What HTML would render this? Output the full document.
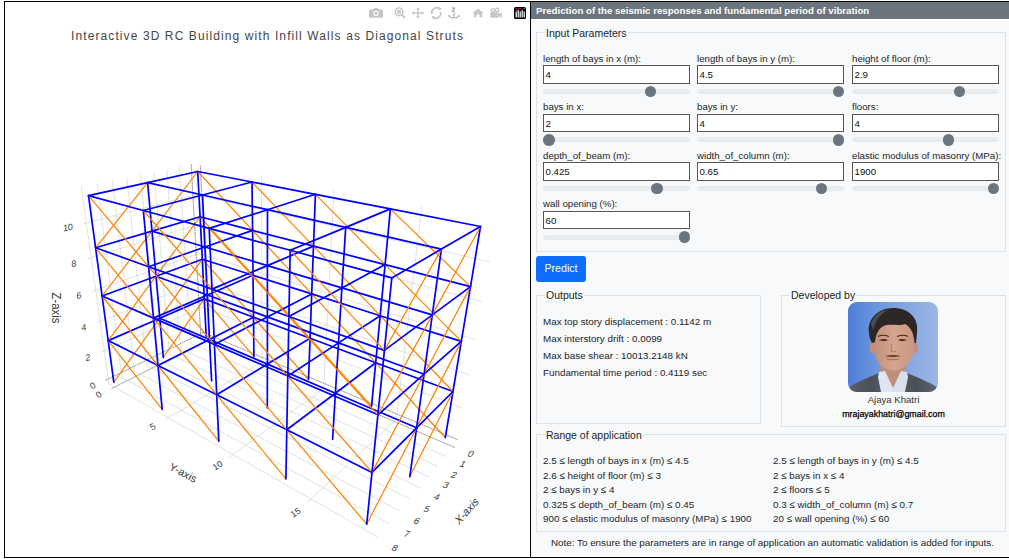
<!DOCTYPE html>
<html><head><meta charset="utf-8">
<style>
*{box-sizing:border-box;margin:0;padding:0}
html,body{width:1009px;height:559px;overflow:hidden;background:#fff;font-family:"Liberation Sans",sans-serif;color:#212529}
#wrap{position:absolute;left:4px;top:1px;width:1010px;height:557px;border:1px solid #000;border-right:none}
#left{position:absolute;left:5px;top:2px;width:525px;height:555px;background:#fff}
#divider{position:absolute;left:530px;top:1px;width:1px;height:557px;background:#000}
#right{position:absolute;left:531px;top:2px;width:478px;height:555px;background:#f8f9fa}
#hdr{position:absolute;left:531px;top:2px;width:478px;height:17px;background:#6c757d;color:#fff;font-weight:bold;font-size:9.68px;line-height:17px;padding-left:5px;white-space:nowrap}
#hdrline{position:absolute;left:531px;top:19px;width:478px;height:1px;background:#fff}
.fs{position:absolute;border:1px solid #dee2e6}
.lg{position:absolute;font-size:10.5px;line-height:12px;background:#f8f9fa;padding:0 1px;white-space:nowrap;color:#212529}
.lbl{position:absolute;font-size:9.7px;white-space:nowrap;line-height:11px}
.inp{position:absolute;height:18.5px;border:1px solid #555;background:#fff;font-size:9.7px;line-height:16.5px;padding-left:1.5px;padding-top:1px;color:#111}
.trk{position:absolute;height:5px;border-radius:3px;background:#e9ecef}
.thm{position:absolute;width:11.5px;height:11.5px;border-radius:50%;background:#6c757d}
.t{position:absolute;font-size:9.84px;white-space:nowrap;line-height:11px}
#btn{position:absolute;left:536px;top:256px;width:50px;height:26px;background:#0d6efd;border-radius:3px;color:#fff;font-size:10.6px;text-align:center;line-height:24px}
#title{position:absolute;left:0;top:29px;width:535px;text-align:center;font-size:12px;letter-spacing:1.1px;color:#444;white-space:nowrap;line-height:14px}
svg{position:absolute;left:0;top:0}
.mb{position:absolute}
.ax{position:absolute;color:#3a3a3a;white-space:nowrap;line-height:1}
</style></head><body>
<div id="left"></div>
<svg width="530" height="559" viewBox="0 0 530 559" style="left:0;top:0">
<g stroke-linecap="round">
<line x1="208.9" y1="339.3" x2="200.3" y2="164.9" stroke="#d0d0d0" stroke-width="0.7" stroke-dasharray="1.5,1"/>
<line x1="262.1" y1="362.0" x2="261.4" y2="176.2" stroke="#d0d0d0" stroke-width="0.7" stroke-dasharray="1.5,1"/>
<line x1="323.8" y1="388.4" x2="334.0" y2="189.6" stroke="#d0d0d0" stroke-width="0.7" stroke-dasharray="1.5,1"/>
<line x1="396.4" y1="419.4" x2="421.9" y2="205.8" stroke="#d0d0d0" stroke-width="0.7" stroke-dasharray="1.5,1"/>
<line x1="203.2" y1="332.5" x2="457.3" y2="439.5" stroke="#d0d0d0" stroke-width="0.7" stroke-dasharray="1.5,1"/>
<line x1="201.8" y1="307.3" x2="462.9" y2="408.1" stroke="#d0d0d0" stroke-width="0.7" stroke-dasharray="1.5,1"/>
<line x1="200.4" y1="281.0" x2="468.9" y2="374.8" stroke="#d0d0d0" stroke-width="0.7" stroke-dasharray="1.5,1"/>
<line x1="198.9" y1="253.6" x2="475.2" y2="339.5" stroke="#d0d0d0" stroke-width="0.7" stroke-dasharray="1.5,1"/>
<line x1="197.4" y1="224.8" x2="481.9" y2="301.8" stroke="#d0d0d0" stroke-width="0.7" stroke-dasharray="1.5,1"/>
<line x1="195.7" y1="194.7" x2="489.1" y2="261.7" stroke="#d0d0d0" stroke-width="0.7" stroke-dasharray="1.5,1"/>
<line x1="200.9" y1="338.2" x2="191.2" y2="164.4" stroke="#d0d0d0" stroke-width="0.7" stroke-dasharray="1.5,1"/>
<line x1="190.8" y1="343.3" x2="179.3" y2="166.9" stroke="#d0d0d0" stroke-width="0.7" stroke-dasharray="1.5,1"/>
<line x1="180.3" y1="348.5" x2="166.9" y2="169.4" stroke="#d0d0d0" stroke-width="0.7" stroke-dasharray="1.5,1"/>
<line x1="169.4" y1="353.9" x2="154.1" y2="172.1" stroke="#d0d0d0" stroke-width="0.7" stroke-dasharray="1.5,1"/>
<line x1="158.2" y1="359.5" x2="140.7" y2="174.9" stroke="#d0d0d0" stroke-width="0.7" stroke-dasharray="1.5,1"/>
<line x1="146.5" y1="365.3" x2="126.8" y2="177.8" stroke="#d0d0d0" stroke-width="0.7" stroke-dasharray="1.5,1"/>
<line x1="134.5" y1="371.3" x2="112.3" y2="180.8" stroke="#d0d0d0" stroke-width="0.7" stroke-dasharray="1.5,1"/>
<line x1="121.9" y1="377.5" x2="97.2" y2="183.9" stroke="#d0d0d0" stroke-width="0.7" stroke-dasharray="1.5,1"/>
<line x1="108.9" y1="383.9" x2="81.3" y2="187.2" stroke="#d0d0d0" stroke-width="0.7" stroke-dasharray="1.5,1"/>
<line x1="203.2" y1="332.5" x2="104.9" y2="380.6" stroke="#d0d0d0" stroke-width="0.7" stroke-dasharray="1.5,1"/>
<line x1="201.8" y1="307.3" x2="100.9" y2="352.4" stroke="#d0d0d0" stroke-width="0.7" stroke-dasharray="1.5,1"/>
<line x1="200.4" y1="281.0" x2="96.6" y2="322.8" stroke="#d0d0d0" stroke-width="0.7" stroke-dasharray="1.5,1"/>
<line x1="198.9" y1="253.6" x2="92.1" y2="291.6" stroke="#d0d0d0" stroke-width="0.7" stroke-dasharray="1.5,1"/>
<line x1="197.4" y1="224.8" x2="87.4" y2="258.7" stroke="#d0d0d0" stroke-width="0.7" stroke-dasharray="1.5,1"/>
<line x1="195.7" y1="194.7" x2="82.4" y2="224.0" stroke="#d0d0d0" stroke-width="0.7" stroke-dasharray="1.5,1"/>
<line x1="200.9" y1="338.2" x2="454.4" y2="447.3" stroke="#d0d0d0" stroke-width="0.7" stroke-dasharray="1.5,1"/>
<line x1="190.8" y1="343.3" x2="446.3" y2="456.7" stroke="#d0d0d0" stroke-width="0.7" stroke-dasharray="1.5,1"/>
<line x1="180.3" y1="348.5" x2="437.8" y2="466.5" stroke="#d0d0d0" stroke-width="0.7" stroke-dasharray="1.5,1"/>
<line x1="169.4" y1="353.9" x2="428.9" y2="476.8" stroke="#d0d0d0" stroke-width="0.7" stroke-dasharray="1.5,1"/>
<line x1="158.2" y1="359.5" x2="419.6" y2="487.6" stroke="#d0d0d0" stroke-width="0.7" stroke-dasharray="1.5,1"/>
<line x1="146.5" y1="365.3" x2="409.8" y2="499.0" stroke="#d0d0d0" stroke-width="0.7" stroke-dasharray="1.5,1"/>
<line x1="134.5" y1="371.3" x2="399.6" y2="510.9" stroke="#d0d0d0" stroke-width="0.7" stroke-dasharray="1.5,1"/>
<line x1="121.9" y1="377.5" x2="388.7" y2="523.5" stroke="#d0d0d0" stroke-width="0.7" stroke-dasharray="1.5,1"/>
<line x1="108.9" y1="383.9" x2="377.3" y2="536.7" stroke="#d0d0d0" stroke-width="0.7" stroke-dasharray="1.5,1"/>
<line x1="208.9" y1="339.3" x2="111.2" y2="388.8" stroke="#d0d0d0" stroke-width="0.7" stroke-dasharray="1.5,1"/>
<line x1="262.1" y1="362.0" x2="165.2" y2="419.8" stroke="#d0d0d0" stroke-width="0.7" stroke-dasharray="1.5,1"/>
<line x1="323.8" y1="388.4" x2="229.6" y2="456.9" stroke="#d0d0d0" stroke-width="0.7" stroke-dasharray="1.5,1"/>
<line x1="396.4" y1="419.4" x2="307.7" y2="501.8" stroke="#d0d0d0" stroke-width="0.7" stroke-dasharray="1.5,1"/>
<line x1="208.9" y1="339.3" x2="200.3" y2="164.9" stroke="#8a8a8a" stroke-width="0.8" stroke-dasharray="1,1.5"/>
<line x1="203.2" y1="332.5" x2="457.3" y2="439.5" stroke="#8a8a8a" stroke-width="0.8" stroke-dasharray="1,1.5"/>
<line x1="200.9" y1="338.2" x2="191.2" y2="164.4" stroke="#8a8a8a" stroke-width="0.8" stroke-dasharray="1,1.5"/>
<line x1="203.2" y1="332.5" x2="104.9" y2="380.6" stroke="#8a8a8a" stroke-width="0.8" stroke-dasharray="1,1.5"/>
<line x1="200.9" y1="338.2" x2="454.4" y2="447.3" stroke="#8a8a8a" stroke-width="0.8" stroke-dasharray="1,1.5"/>
<line x1="208.9" y1="339.3" x2="111.2" y2="388.8" stroke="#8a8a8a" stroke-width="0.8" stroke-dasharray="1,1.5"/>
<line x1="206.2" y1="336.1" x2="204.3" y2="298.9" stroke="#0000ff" stroke-width="1.7"/>
<line x1="204.3" y1="298.9" x2="202.3" y2="259.2" stroke="#0000ff" stroke-width="1.7"/>
<line x1="163.3" y1="357.5" x2="204.3" y2="298.9" stroke="#ff8000" stroke-width="1.2"/>
<line x1="253.9" y1="356.3" x2="204.3" y2="298.9" stroke="#ff8000" stroke-width="1.2"/>
<line x1="204.3" y1="298.9" x2="159.8" y2="318.2" stroke="#0000ff" stroke-width="1.7"/>
<line x1="204.3" y1="298.9" x2="253.5" y2="317.2" stroke="#0000ff" stroke-width="1.7"/>
<line x1="202.3" y1="259.2" x2="200.1" y2="216.8" stroke="#0000ff" stroke-width="1.7"/>
<line x1="163.3" y1="357.5" x2="159.8" y2="318.2" stroke="#0000ff" stroke-width="1.7"/>
<line x1="159.8" y1="318.2" x2="202.3" y2="259.2" stroke="#ff8000" stroke-width="1.2"/>
<line x1="253.5" y1="317.2" x2="202.3" y2="259.2" stroke="#ff8000" stroke-width="1.2"/>
<line x1="253.9" y1="356.3" x2="253.5" y2="317.2" stroke="#0000ff" stroke-width="1.7"/>
<line x1="202.3" y1="259.2" x2="156.0" y2="276.2" stroke="#0000ff" stroke-width="1.7"/>
<line x1="200.1" y1="216.8" x2="197.7" y2="171.5" stroke="#0000ff" stroke-width="1.7"/>
<line x1="202.3" y1="259.2" x2="253.0" y2="275.3" stroke="#0000ff" stroke-width="1.7"/>
<line x1="113.8" y1="382.1" x2="159.8" y2="318.2" stroke="#ff8000" stroke-width="1.2"/>
<line x1="156.0" y1="276.2" x2="200.1" y2="216.8" stroke="#ff8000" stroke-width="1.2"/>
<line x1="159.8" y1="318.2" x2="156.0" y2="276.2" stroke="#0000ff" stroke-width="1.7"/>
<line x1="253.0" y1="275.3" x2="200.1" y2="216.8" stroke="#ff8000" stroke-width="1.2"/>
<line x1="200.1" y1="216.8" x2="152.0" y2="231.1" stroke="#0000ff" stroke-width="1.7"/>
<line x1="253.5" y1="317.2" x2="253.0" y2="275.3" stroke="#0000ff" stroke-width="1.7"/>
<line x1="308.5" y1="379.5" x2="253.5" y2="317.2" stroke="#ff8000" stroke-width="1.2"/>
<line x1="159.8" y1="318.2" x2="108.2" y2="340.6" stroke="#0000ff" stroke-width="1.7"/>
<line x1="200.1" y1="216.8" x2="252.6" y2="230.4" stroke="#0000ff" stroke-width="1.7"/>
<line x1="152.0" y1="231.1" x2="197.7" y2="171.5" stroke="#ff8000" stroke-width="1.2"/>
<line x1="113.8" y1="382.1" x2="108.2" y2="340.6" stroke="#0000ff" stroke-width="1.7"/>
<line x1="252.6" y1="230.4" x2="197.7" y2="171.5" stroke="#ff8000" stroke-width="1.2"/>
<line x1="159.8" y1="318.2" x2="209.5" y2="339.5" stroke="#0000ff" stroke-width="1.7"/>
<line x1="197.7" y1="171.5" x2="147.6" y2="182.6" stroke="#0000ff" stroke-width="1.7"/>
<line x1="156.0" y1="276.2" x2="152.0" y2="231.1" stroke="#0000ff" stroke-width="1.7"/>
<line x1="108.2" y1="340.6" x2="156.0" y2="276.2" stroke="#ff8000" stroke-width="1.2"/>
<line x1="253.5" y1="317.2" x2="310.1" y2="338.3" stroke="#0000ff" stroke-width="1.7"/>
<line x1="253.5" y1="317.2" x2="209.5" y2="339.5" stroke="#0000ff" stroke-width="1.7"/>
<line x1="197.7" y1="171.5" x2="252.0" y2="182.0" stroke="#0000ff" stroke-width="1.7"/>
<line x1="253.0" y1="275.3" x2="252.6" y2="230.4" stroke="#0000ff" stroke-width="1.7"/>
<line x1="308.5" y1="379.5" x2="310.1" y2="338.3" stroke="#0000ff" stroke-width="1.7"/>
<line x1="156.0" y1="276.2" x2="102.1" y2="296.0" stroke="#0000ff" stroke-width="1.7"/>
<line x1="211.6" y1="380.8" x2="209.5" y2="339.5" stroke="#0000ff" stroke-width="1.7"/>
<line x1="310.1" y1="338.3" x2="253.0" y2="275.3" stroke="#ff8000" stroke-width="1.2"/>
<line x1="152.0" y1="231.1" x2="147.6" y2="182.6" stroke="#0000ff" stroke-width="1.7"/>
<line x1="108.2" y1="340.6" x2="102.1" y2="296.0" stroke="#0000ff" stroke-width="1.7"/>
<line x1="156.0" y1="276.2" x2="207.4" y2="295.0" stroke="#0000ff" stroke-width="1.7"/>
<line x1="102.1" y1="296.0" x2="152.0" y2="231.1" stroke="#ff8000" stroke-width="1.2"/>
<line x1="253.0" y1="275.3" x2="311.7" y2="293.9" stroke="#0000ff" stroke-width="1.7"/>
<line x1="253.0" y1="275.3" x2="207.4" y2="295.0" stroke="#0000ff" stroke-width="1.7"/>
<line x1="252.6" y1="230.4" x2="252.0" y2="182.0" stroke="#0000ff" stroke-width="1.7"/>
<line x1="162.2" y1="409.3" x2="108.2" y2="340.6" stroke="#ff8000" stroke-width="1.2"/>
<line x1="152.0" y1="231.1" x2="95.6" y2="247.8" stroke="#0000ff" stroke-width="1.7"/>
<line x1="371.6" y1="406.2" x2="310.1" y2="338.3" stroke="#ff8000" stroke-width="1.2"/>
<line x1="311.7" y1="293.9" x2="252.6" y2="230.4" stroke="#ff8000" stroke-width="1.2"/>
<line x1="310.1" y1="338.3" x2="311.7" y2="293.9" stroke="#0000ff" stroke-width="1.7"/>
<line x1="95.6" y1="247.8" x2="147.6" y2="182.6" stroke="#ff8000" stroke-width="1.2"/>
<line x1="209.5" y1="339.5" x2="207.4" y2="295.0" stroke="#0000ff" stroke-width="1.7"/>
<line x1="108.2" y1="340.6" x2="158.0" y2="365.5" stroke="#0000ff" stroke-width="1.7"/>
<line x1="152.0" y1="231.1" x2="205.0" y2="247.0" stroke="#0000ff" stroke-width="1.7"/>
<line x1="102.1" y1="296.0" x2="95.6" y2="247.8" stroke="#0000ff" stroke-width="1.7"/>
<line x1="252.6" y1="230.4" x2="313.5" y2="246.1" stroke="#0000ff" stroke-width="1.7"/>
<line x1="252.6" y1="230.4" x2="205.0" y2="247.0" stroke="#0000ff" stroke-width="1.7"/>
<line x1="310.1" y1="338.3" x2="375.7" y2="362.7" stroke="#0000ff" stroke-width="1.7"/>
<line x1="147.6" y1="182.6" x2="88.5" y2="195.6" stroke="#0000ff" stroke-width="1.7"/>
<line x1="209.5" y1="339.5" x2="158.0" y2="365.5" stroke="#0000ff" stroke-width="1.7"/>
<line x1="371.6" y1="406.2" x2="375.7" y2="362.7" stroke="#0000ff" stroke-width="1.7"/>
<line x1="310.1" y1="338.3" x2="267.4" y2="364.1" stroke="#0000ff" stroke-width="1.7"/>
<line x1="313.5" y1="246.1" x2="252.0" y2="182.0" stroke="#ff8000" stroke-width="1.2"/>
<line x1="158.0" y1="365.5" x2="102.1" y2="296.0" stroke="#ff8000" stroke-width="1.2"/>
<line x1="209.5" y1="339.5" x2="267.4" y2="364.1" stroke="#0000ff" stroke-width="1.7"/>
<line x1="147.6" y1="182.6" x2="202.5" y2="195.0" stroke="#0000ff" stroke-width="1.7"/>
<line x1="162.2" y1="409.3" x2="158.0" y2="365.5" stroke="#0000ff" stroke-width="1.7"/>
<line x1="375.7" y1="362.7" x2="311.7" y2="293.9" stroke="#ff8000" stroke-width="1.2"/>
<line x1="311.7" y1="293.9" x2="313.5" y2="246.1" stroke="#0000ff" stroke-width="1.7"/>
<line x1="252.0" y1="182.0" x2="315.4" y2="194.3" stroke="#0000ff" stroke-width="1.7"/>
<line x1="95.6" y1="247.8" x2="88.5" y2="195.6" stroke="#0000ff" stroke-width="1.7"/>
<line x1="252.0" y1="182.0" x2="202.5" y2="195.0" stroke="#0000ff" stroke-width="1.7"/>
<line x1="207.4" y1="295.0" x2="205.0" y2="247.0" stroke="#0000ff" stroke-width="1.7"/>
<line x1="267.3" y1="407.8" x2="267.4" y2="364.1" stroke="#0000ff" stroke-width="1.7"/>
<line x1="102.1" y1="296.0" x2="153.5" y2="318.1" stroke="#0000ff" stroke-width="1.7"/>
<line x1="445.3" y1="437.5" x2="375.7" y2="362.7" stroke="#ff8000" stroke-width="1.2"/>
<line x1="311.7" y1="293.9" x2="380.2" y2="315.7" stroke="#0000ff" stroke-width="1.7"/>
<line x1="207.4" y1="295.0" x2="153.5" y2="318.1" stroke="#0000ff" stroke-width="1.7"/>
<line x1="153.5" y1="318.1" x2="95.6" y2="247.8" stroke="#ff8000" stroke-width="1.2"/>
<line x1="311.7" y1="293.9" x2="267.4" y2="316.9" stroke="#0000ff" stroke-width="1.7"/>
<line x1="313.5" y1="246.1" x2="315.4" y2="194.3" stroke="#0000ff" stroke-width="1.7"/>
<line x1="375.7" y1="362.7" x2="380.2" y2="315.7" stroke="#0000ff" stroke-width="1.7"/>
<line x1="207.4" y1="295.0" x2="267.4" y2="316.9" stroke="#0000ff" stroke-width="1.7"/>
<line x1="445.3" y1="437.5" x2="453.0" y2="391.5" stroke="#0000ff" stroke-width="1.7"/>
<line x1="205.0" y1="247.0" x2="202.5" y2="195.0" stroke="#0000ff" stroke-width="1.7"/>
<line x1="375.7" y1="362.7" x2="453.0" y2="391.5" stroke="#0000ff" stroke-width="1.7"/>
<line x1="380.2" y1="315.7" x2="313.5" y2="246.1" stroke="#ff8000" stroke-width="1.2"/>
<line x1="158.0" y1="365.5" x2="153.5" y2="318.1" stroke="#0000ff" stroke-width="1.7"/>
<line x1="218.8" y1="441.1" x2="158.0" y2="365.5" stroke="#ff8000" stroke-width="1.2"/>
<line x1="95.6" y1="247.8" x2="148.6" y2="266.7" stroke="#0000ff" stroke-width="1.7"/>
<line x1="313.5" y1="246.1" x2="385.1" y2="264.6" stroke="#0000ff" stroke-width="1.7"/>
<line x1="267.4" y1="364.1" x2="267.4" y2="316.9" stroke="#0000ff" stroke-width="1.7"/>
<line x1="375.7" y1="362.7" x2="335.4" y2="393.2" stroke="#0000ff" stroke-width="1.7"/>
<line x1="453.0" y1="391.5" x2="380.2" y2="315.7" stroke="#ff8000" stroke-width="1.2"/>
<line x1="148.6" y1="266.7" x2="88.5" y2="195.6" stroke="#ff8000" stroke-width="1.2"/>
<line x1="205.0" y1="247.0" x2="148.6" y2="266.7" stroke="#0000ff" stroke-width="1.7"/>
<line x1="313.5" y1="246.1" x2="267.4" y2="265.6" stroke="#0000ff" stroke-width="1.7"/>
<line x1="158.0" y1="365.5" x2="216.7" y2="394.8" stroke="#0000ff" stroke-width="1.7"/>
<line x1="205.0" y1="247.0" x2="267.4" y2="265.6" stroke="#0000ff" stroke-width="1.7"/>
<line x1="385.1" y1="264.6" x2="315.4" y2="194.3" stroke="#ff8000" stroke-width="1.2"/>
<line x1="267.4" y1="364.1" x2="335.4" y2="393.2" stroke="#0000ff" stroke-width="1.7"/>
<line x1="380.2" y1="315.7" x2="385.1" y2="264.6" stroke="#0000ff" stroke-width="1.7"/>
<line x1="88.5" y1="195.6" x2="143.3" y2="210.5" stroke="#0000ff" stroke-width="1.7"/>
<line x1="267.4" y1="364.1" x2="216.7" y2="394.8" stroke="#0000ff" stroke-width="1.7"/>
<line x1="332.6" y1="439.3" x2="335.4" y2="393.2" stroke="#0000ff" stroke-width="1.7"/>
<line x1="380.2" y1="315.7" x2="461.3" y2="341.4" stroke="#0000ff" stroke-width="1.7"/>
<line x1="315.4" y1="194.3" x2="390.4" y2="208.9" stroke="#0000ff" stroke-width="1.7"/>
<line x1="153.5" y1="318.1" x2="148.6" y2="266.7" stroke="#0000ff" stroke-width="1.7"/>
<line x1="453.0" y1="391.5" x2="461.3" y2="341.4" stroke="#0000ff" stroke-width="1.7"/>
<line x1="409.8" y1="476.6" x2="453.0" y2="391.5" stroke="#ff8000" stroke-width="1.2"/>
<line x1="218.8" y1="441.1" x2="216.7" y2="394.8" stroke="#0000ff" stroke-width="1.7"/>
<line x1="202.5" y1="195.0" x2="143.3" y2="210.5" stroke="#0000ff" stroke-width="1.7"/>
<line x1="216.7" y1="394.8" x2="153.5" y2="318.1" stroke="#ff8000" stroke-width="1.2"/>
<line x1="315.4" y1="194.3" x2="267.5" y2="209.7" stroke="#0000ff" stroke-width="1.7"/>
<line x1="267.4" y1="316.9" x2="267.4" y2="265.6" stroke="#0000ff" stroke-width="1.7"/>
<line x1="202.5" y1="195.0" x2="267.5" y2="209.7" stroke="#0000ff" stroke-width="1.7"/>
<line x1="461.3" y1="341.4" x2="385.1" y2="264.6" stroke="#ff8000" stroke-width="1.2"/>
<line x1="380.2" y1="315.7" x2="338.5" y2="342.9" stroke="#0000ff" stroke-width="1.7"/>
<line x1="385.1" y1="264.6" x2="390.4" y2="208.9" stroke="#0000ff" stroke-width="1.7"/>
<line x1="453.0" y1="391.5" x2="416.6" y2="427.8" stroke="#0000ff" stroke-width="1.7"/>
<line x1="153.5" y1="318.1" x2="214.4" y2="344.4" stroke="#0000ff" stroke-width="1.7"/>
<line x1="148.6" y1="266.7" x2="143.3" y2="210.5" stroke="#0000ff" stroke-width="1.7"/>
<line x1="267.4" y1="316.9" x2="338.5" y2="342.9" stroke="#0000ff" stroke-width="1.7"/>
<line x1="385.1" y1="264.6" x2="470.5" y2="286.6" stroke="#0000ff" stroke-width="1.7"/>
<line x1="267.4" y1="316.9" x2="214.4" y2="344.4" stroke="#0000ff" stroke-width="1.7"/>
<line x1="461.3" y1="341.4" x2="470.5" y2="286.6" stroke="#0000ff" stroke-width="1.7"/>
<line x1="285.9" y1="478.8" x2="216.7" y2="394.8" stroke="#ff8000" stroke-width="1.2"/>
<line x1="267.4" y1="265.6" x2="267.5" y2="209.7" stroke="#0000ff" stroke-width="1.7"/>
<line x1="335.4" y1="393.2" x2="338.5" y2="342.9" stroke="#0000ff" stroke-width="1.7"/>
<line x1="409.8" y1="476.6" x2="416.6" y2="427.8" stroke="#0000ff" stroke-width="1.7"/>
<line x1="470.5" y1="286.6" x2="390.4" y2="208.9" stroke="#ff8000" stroke-width="1.2"/>
<line x1="214.4" y1="344.4" x2="148.6" y2="266.7" stroke="#ff8000" stroke-width="1.2"/>
<line x1="335.4" y1="393.2" x2="416.6" y2="427.8" stroke="#0000ff" stroke-width="1.7"/>
<line x1="416.6" y1="427.8" x2="461.3" y2="341.4" stroke="#ff8000" stroke-width="1.2"/>
<line x1="216.7" y1="394.8" x2="214.4" y2="344.4" stroke="#0000ff" stroke-width="1.7"/>
<line x1="385.1" y1="264.6" x2="341.9" y2="287.9" stroke="#0000ff" stroke-width="1.7"/>
<line x1="390.4" y1="208.9" x2="480.5" y2="226.5" stroke="#0000ff" stroke-width="1.7"/>
<line x1="335.4" y1="393.2" x2="286.8" y2="429.8" stroke="#0000ff" stroke-width="1.7"/>
<line x1="148.6" y1="266.7" x2="212.0" y2="289.1" stroke="#0000ff" stroke-width="1.7"/>
<line x1="216.7" y1="394.8" x2="286.8" y2="429.8" stroke="#0000ff" stroke-width="1.7"/>
<line x1="267.4" y1="265.6" x2="341.9" y2="287.9" stroke="#0000ff" stroke-width="1.7"/>
<line x1="461.3" y1="341.4" x2="424.1" y2="374.2" stroke="#0000ff" stroke-width="1.7"/>
<line x1="470.5" y1="286.6" x2="480.5" y2="226.5" stroke="#0000ff" stroke-width="1.7"/>
<line x1="267.4" y1="265.6" x2="212.0" y2="289.1" stroke="#0000ff" stroke-width="1.7"/>
<line x1="285.9" y1="478.8" x2="286.8" y2="429.8" stroke="#0000ff" stroke-width="1.7"/>
<line x1="212.0" y1="289.1" x2="143.3" y2="210.5" stroke="#ff8000" stroke-width="1.2"/>
<line x1="390.4" y1="208.9" x2="345.7" y2="227.4" stroke="#0000ff" stroke-width="1.7"/>
<line x1="338.5" y1="342.9" x2="341.9" y2="287.9" stroke="#0000ff" stroke-width="1.7"/>
<line x1="366.7" y1="524.2" x2="416.6" y2="427.8" stroke="#ff8000" stroke-width="1.2"/>
<line x1="424.1" y1="374.2" x2="470.5" y2="286.6" stroke="#ff8000" stroke-width="1.2"/>
<line x1="286.8" y1="429.8" x2="214.4" y2="344.4" stroke="#ff8000" stroke-width="1.2"/>
<line x1="214.4" y1="344.4" x2="212.0" y2="289.1" stroke="#0000ff" stroke-width="1.7"/>
<line x1="143.3" y1="210.5" x2="209.2" y2="228.4" stroke="#0000ff" stroke-width="1.7"/>
<line x1="338.5" y1="342.9" x2="424.1" y2="374.2" stroke="#0000ff" stroke-width="1.7"/>
<line x1="267.5" y1="209.7" x2="345.7" y2="227.4" stroke="#0000ff" stroke-width="1.7"/>
<line x1="416.6" y1="427.8" x2="424.1" y2="374.2" stroke="#0000ff" stroke-width="1.7"/>
<line x1="267.5" y1="209.7" x2="209.2" y2="228.4" stroke="#0000ff" stroke-width="1.7"/>
<line x1="366.7" y1="524.2" x2="286.8" y2="429.8" stroke="#ff8000" stroke-width="1.2"/>
<line x1="470.5" y1="286.6" x2="432.3" y2="314.9" stroke="#0000ff" stroke-width="1.7"/>
<line x1="338.5" y1="342.9" x2="287.8" y2="376.0" stroke="#0000ff" stroke-width="1.7"/>
<line x1="214.4" y1="344.4" x2="287.8" y2="376.0" stroke="#0000ff" stroke-width="1.7"/>
<line x1="416.6" y1="427.8" x2="372.0" y2="472.4" stroke="#0000ff" stroke-width="1.7"/>
<line x1="341.9" y1="287.9" x2="345.7" y2="227.4" stroke="#0000ff" stroke-width="1.7"/>
<line x1="432.3" y1="314.9" x2="480.5" y2="226.5" stroke="#ff8000" stroke-width="1.2"/>
<line x1="212.0" y1="289.1" x2="209.2" y2="228.4" stroke="#0000ff" stroke-width="1.7"/>
<line x1="286.8" y1="429.8" x2="287.8" y2="376.0" stroke="#0000ff" stroke-width="1.7"/>
<line x1="366.7" y1="524.2" x2="372.0" y2="472.4" stroke="#0000ff" stroke-width="1.7"/>
<line x1="286.8" y1="429.8" x2="372.0" y2="472.4" stroke="#0000ff" stroke-width="1.7"/>
<line x1="341.9" y1="287.9" x2="432.3" y2="314.9" stroke="#0000ff" stroke-width="1.7"/>
<line x1="287.8" y1="376.0" x2="212.0" y2="289.1" stroke="#ff8000" stroke-width="1.2"/>
<line x1="480.5" y1="226.5" x2="441.4" y2="249.1" stroke="#0000ff" stroke-width="1.7"/>
<line x1="424.1" y1="374.2" x2="432.3" y2="314.9" stroke="#0000ff" stroke-width="1.7"/>
<line x1="372.0" y1="472.4" x2="424.1" y2="374.2" stroke="#ff8000" stroke-width="1.2"/>
<line x1="341.9" y1="287.9" x2="288.9" y2="316.5" stroke="#0000ff" stroke-width="1.7"/>
<line x1="212.0" y1="289.1" x2="288.9" y2="316.5" stroke="#0000ff" stroke-width="1.7"/>
<line x1="372.0" y1="472.4" x2="287.8" y2="376.0" stroke="#ff8000" stroke-width="1.2"/>
<line x1="345.7" y1="227.4" x2="441.4" y2="249.1" stroke="#0000ff" stroke-width="1.7"/>
<line x1="424.1" y1="374.2" x2="377.9" y2="414.8" stroke="#0000ff" stroke-width="1.7"/>
<line x1="288.9" y1="316.5" x2="209.2" y2="228.4" stroke="#ff8000" stroke-width="1.2"/>
<line x1="287.8" y1="376.0" x2="288.9" y2="316.5" stroke="#0000ff" stroke-width="1.7"/>
<line x1="432.3" y1="314.9" x2="441.4" y2="249.1" stroke="#0000ff" stroke-width="1.7"/>
<line x1="345.7" y1="227.4" x2="290.2" y2="250.3" stroke="#0000ff" stroke-width="1.7"/>
<line x1="287.8" y1="376.0" x2="377.9" y2="414.8" stroke="#0000ff" stroke-width="1.7"/>
<line x1="209.2" y1="228.4" x2="290.2" y2="250.3" stroke="#0000ff" stroke-width="1.7"/>
<line x1="372.0" y1="472.4" x2="377.9" y2="414.8" stroke="#0000ff" stroke-width="1.7"/>
<line x1="377.9" y1="414.8" x2="432.3" y2="314.9" stroke="#ff8000" stroke-width="1.2"/>
<line x1="377.9" y1="414.8" x2="288.9" y2="316.5" stroke="#ff8000" stroke-width="1.2"/>
<line x1="432.3" y1="314.9" x2="384.4" y2="350.4" stroke="#0000ff" stroke-width="1.7"/>
<line x1="288.9" y1="316.5" x2="290.2" y2="250.3" stroke="#0000ff" stroke-width="1.7"/>
<line x1="384.4" y1="350.4" x2="441.4" y2="249.1" stroke="#ff8000" stroke-width="1.2"/>
<line x1="288.9" y1="316.5" x2="384.4" y2="350.4" stroke="#0000ff" stroke-width="1.7"/>
<line x1="377.9" y1="414.8" x2="384.4" y2="350.4" stroke="#0000ff" stroke-width="1.7"/>
<line x1="441.4" y1="249.1" x2="391.8" y2="277.9" stroke="#0000ff" stroke-width="1.7"/>
<line x1="384.4" y1="350.4" x2="290.2" y2="250.3" stroke="#ff8000" stroke-width="1.2"/>
<line x1="290.2" y1="250.3" x2="391.8" y2="277.9" stroke="#0000ff" stroke-width="1.7"/>
<line x1="384.4" y1="350.4" x2="391.8" y2="277.9" stroke="#0000ff" stroke-width="1.7"/>
</g>

</svg>
<div class="ax" style="left:68px;top:227.9px;font-size:9px;transform:translate(-50%,-50%) rotate(-10deg) skewX(-8deg)">10</div>
<div class="ax" style="left:73.8px;top:263.5px;font-size:9px;transform:translate(-50%,-50%) rotate(-10deg) skewX(-8deg)">8</div>
<div class="ax" style="left:78.6px;top:295.7px;font-size:9px;transform:translate(-50%,-50%) rotate(-10deg) skewX(-8deg)">6</div>
<div class="ax" style="left:83.6px;top:327.9px;font-size:9px;transform:translate(-50%,-50%) rotate(-10deg) skewX(-8deg)">4</div>
<div class="ax" style="left:88.4px;top:358.2px;font-size:9px;transform:translate(-50%,-50%) rotate(-10deg) skewX(-8deg)">2</div>
<div class="ax" style="left:92.7px;top:386.3px;font-size:9px;transform:translate(-50%,-50%) matrix(0.85,-0.53,0.55,0.83,0,0)">0</div>
<div class="ax" style="left:99.1px;top:394.7px;font-size:9px;transform:translate(-50%,-50%) matrix(0.85,-0.53,0.55,0.83,0,0)">0</div>
<div class="ax" style="left:153.3px;top:427px;font-size:9px;transform:translate(-50%,-50%) matrix(0.85,-0.53,0.55,0.83,0,0)">5</div>
<div class="ax" style="left:217.6px;top:466px;font-size:9px;transform:translate(-50%,-50%) matrix(0.85,-0.53,0.55,0.83,0,0)">10</div>
<div class="ax" style="left:296.4px;top:513px;font-size:9px;transform:translate(-50%,-50%) matrix(0.85,-0.53,0.55,0.83,0,0)">15</div>
<div class="ax" style="left:471.2px;top:454.2px;font-size:9.5px;transform:translate(-50%,-50%) matrix(0.98,0.2,-0.48,0.88,0,0)">0</div>
<div class="ax" style="left:462.6px;top:464.2px;font-size:9.5px;transform:translate(-50%,-50%) matrix(0.98,0.2,-0.48,0.88,0,0)">1</div>
<div class="ax" style="left:453.8px;top:474.5px;font-size:9.5px;transform:translate(-50%,-50%) matrix(0.98,0.2,-0.48,0.88,0,0)">2</div>
<div class="ax" style="left:446.2px;top:485.4px;font-size:9.5px;transform:translate(-50%,-50%) matrix(0.98,0.2,-0.48,0.88,0,0)">3</div>
<div class="ax" style="left:436.5px;top:496.9px;font-size:9.5px;transform:translate(-50%,-50%) matrix(0.98,0.2,-0.48,0.88,0,0)">4</div>
<div class="ax" style="left:427.3px;top:508.5px;font-size:9.5px;transform:translate(-50%,-50%) matrix(0.98,0.2,-0.48,0.88,0,0)">5</div>
<div class="ax" style="left:416.9px;top:521.2px;font-size:9.5px;transform:translate(-50%,-50%) matrix(0.98,0.2,-0.48,0.88,0,0)">6</div>
<div class="ax" style="left:406.5px;top:533.9px;font-size:9.5px;transform:translate(-50%,-50%) matrix(0.98,0.2,-0.48,0.88,0,0)">7</div>
<div class="ax" style="left:395px;top:548.2px;font-size:9.5px;transform:translate(-50%,-50%) matrix(0.98,0.2,-0.48,0.88,0,0)">8</div>
<div class="ax" style="left:55.6px;top:307.5px;font-size:11.3px;transform:translate(-50%,-50%) rotate(90deg) scaleY(1.15)">Z-axis</div>
<div class="ax" style="left:182.9px;top:473.3px;font-size:11px;transform:translate(-50%,-50%) rotate(28deg)">Y-axis</div>
<div class="ax" style="left:466.5px;top:510.8px;font-size:11px;transform:translate(-50%,-50%) rotate(-48deg) skewX(-15deg)">X-axis</div>
<div id="title">Interactive 3D RC Building with Infill Walls as Diagonal Struts</div>
<svg width="170" height="24" viewBox="0 0 170 24" style="position:absolute;left:360px;top:0px">
<g fill="#c7c7c7">
<!-- camera at 370..382, y 8..17.5 -->
<path d="M10,9.5 h3 l1.2,-1.6 h3.6 l1.2,1.6 h3 a1,1 0 0 1 1,1 v6.2 a1,1 0 0 1 -1,1 h-12 a1,1 0 0 1 -1,-1 v-6.2 a1,1 0 0 1 1,-1 z"/>
</g>
<circle cx="16" cy="13.3" r="2.6" fill="#fff"/>
<circle cx="16" cy="13.3" r="1.5" fill="#c7c7c7"/>
<!-- zoom 394..406 -->
<g fill="none" stroke="#c7c7c7">
<circle cx="39" cy="11.8" r="3.8" stroke-width="1.6"/>
<line x1="41.8" y1="14.8" x2="45" y2="18" stroke-width="2"/>
</g>
<rect x="37.2" y="10" width="3.6" height="3.6" fill="#c7c7c7"/>
<!-- pan 412..424 -->
<g fill="#c7c7c7">
<rect x="57.3" y="8.5" width="1.4" height="9"/>
<rect x="52.5" y="12.3" width="11" height="1.4"/>
<path d="M58,7.2 l2,2.2 h-4z M58,18.8 l2,-2.2 h-4z M52,13 l2.2,-2 v4z M64,13 l-2.2,-2 v4z"/>
</g>
<!-- orbit 430..442 -->
<g fill="none" stroke="#c7c7c7" stroke-width="1.7">
<path d="M72,14 A5,5 0 0 1 80,8.8"/>
<path d="M80.5,12 A5,5 0 0 1 73,17.5"/>
</g>
<g fill="#c7c7c7">
<path d="M79,7 l3,2 l-3.2,1.6z"/>
<path d="M74,19 l-3,-2 l3.2,-1.6z"/>
</g>
<!-- turntable 448..460 -->
<g fill="none" stroke="#9a9a9a" stroke-width="1">
<path d="M92,8 h3 l-3,3.2 h3"/>
<line x1="94" y1="12.5" x2="94" y2="16.5"/>
<path d="M89,15.6 C90,18.6 98,18.6 99,15.6"/>
</g>
<g fill="#9a9a9a"><path d="M88,15.2 l2,0.2 l-1,1.6z M100,15.2 l-2,0.2 l1,1.6z"/></g>
<!-- home 472.7..483 -->
<path d="M112.5,13 L118,8.5 L123.5,13 L122.2,13 L122.2,17.3 L119.5,17.3 L119.5,14.5 L116.5,14.5 L116.5,17.3 L113.8,17.3 L113.8,13 Z" fill="#c7c7c7"/>
<!-- movie 490..502 -->
<g fill="#c7c7c7">
<circle cx="132.8" cy="10.3" r="2.3"/>
<circle cx="137.2" cy="10" r="2.4"/>
<rect x="130.3" y="12.2" width="8.5" height="5.6" rx="0.8"/>
<path d="M138.5,14 l3.3,-1.8 v5.6 l-3.3,-1.8z"/>
</g>
<circle cx="132.8" cy="10.3" r="1" fill="#fff"/>
<circle cx="137.2" cy="10" r="1.1" fill="#fff"/>
<!-- plotly logo 514..526 y 7..19 -->
<rect x="154" y="7" width="12" height="12" rx="1.6" fill="#000"/>
<g fill="#fff">
<rect x="155.6" y="11.5" width="1.2" height="6"/>
<rect x="157.6" y="10" width="1.2" height="7.5"/>
<rect x="159.6" y="11.5" width="1.2" height="6"/>
<rect x="161.6" y="10" width="1.2" height="7.5"/>
<rect x="163.6" y="11.5" width="1.2" height="6"/>
</g>
<g fill="#e53a8c"><circle cx="156.2" cy="8.7" r="0.6"/><circle cx="158.2" cy="8.7" r="0.6"/><circle cx="160.2" cy="8.7" r="0.6"/><circle cx="156.2" cy="10.3" r="0.6"/></g>
<circle cx="164.2" cy="8.7" r="0.6" fill="#2ac7e0"/>
</svg>

<div id="wrap"></div>
<div id="right"></div>
<div id="divider"></div>
<div id="hdr">Prediction of the seismic responses and fundamental period of vibration</div>
<div id="hdrline"></div>
<div class="fs" style="left:536px;top:32px;width:470px;height:219.5px"></div>
<div class="lg" style="left:545px;top:26.5px">Input Parameters</div>
<div class="lbl" style="left:543px;top:52.5px">length of bays in x (m):</div>
<div class="inp" style="left:543px;top:65.0px;width:147px">4</div>
<div class="trk" style="left:543px;top:88.7px;width:147px"></div>
<div class="thm" style="left:644.6px;top:85.5px"></div>
<div class="lbl" style="left:697px;top:52.5px">length of bays in y (m):</div>
<div class="inp" style="left:697px;top:65.0px;width:147px">4.5</div>
<div class="trk" style="left:697px;top:88.7px;width:147px"></div>
<div class="thm" style="left:832.5px;top:85.5px"></div>
<div class="lbl" style="left:852px;top:52.5px">height of floor (m):</div>
<div class="inp" style="left:852px;top:65.0px;width:147px">2.9</div>
<div class="trk" style="left:852px;top:88.7px;width:147px"></div>
<div class="thm" style="left:953.6px;top:85.5px"></div>
<div class="lbl" style="left:543px;top:101.1px">bays in x:</div>
<div class="inp" style="left:543px;top:113.6px;width:147px">2</div>
<div class="trk" style="left:543px;top:137.3px;width:147px"></div>
<div class="thm" style="left:543.0px;top:134.1px"></div>
<div class="lbl" style="left:697px;top:101.1px">bays in y:</div>
<div class="inp" style="left:697px;top:113.6px;width:147px">4</div>
<div class="trk" style="left:697px;top:137.3px;width:147px"></div>
<div class="thm" style="left:832.5px;top:134.1px"></div>
<div class="lbl" style="left:852px;top:101.1px">floors:</div>
<div class="inp" style="left:852px;top:113.6px;width:147px">4</div>
<div class="trk" style="left:852px;top:137.3px;width:147px"></div>
<div class="thm" style="left:942.8px;top:134.1px"></div>
<div class="lbl" style="left:543px;top:149.7px">depth_of_beam (m):</div>
<div class="inp" style="left:543px;top:162.2px;width:147px">0.425</div>
<div class="trk" style="left:543px;top:185.9px;width:147px"></div>
<div class="thm" style="left:651.4px;top:182.7px"></div>
<div class="lbl" style="left:697px;top:149.7px">width_of_column (m):</div>
<div class="inp" style="left:697px;top:162.2px;width:147px">0.65</div>
<div class="trk" style="left:697px;top:185.9px;width:147px"></div>
<div class="thm" style="left:815.6px;top:182.7px"></div>
<div class="lbl" style="left:852px;top:149.7px">elastic modulus of masonry (MPa):</div>
<div class="inp" style="left:852px;top:162.2px;width:147px">1900</div>
<div class="trk" style="left:852px;top:185.9px;width:147px"></div>
<div class="thm" style="left:987.5px;top:182.7px"></div>
<div class="lbl" style="left:543px;top:198.3px">wall opening (%):</div>
<div class="inp" style="left:543px;top:210.8px;width:147px">60</div>
<div class="trk" style="left:543px;top:234.5px;width:147px"></div>
<div class="thm" style="left:678.5px;top:231.3px"></div>
<div id="btn">Predict</div>
<div class="fs" style="left:536px;top:295px;width:225px;height:129px"></div>
<div class="lg" style="left:545px;top:288.7px">Outputs</div>
<div class="t" style="left:543px;top:315.5px">Max top story displacement : 0.1142 m</div>
<div class="t" style="left:543px;top:332.6px">Max interstory drift : 0.0099</div>
<div class="t" style="left:543px;top:349.7px">Max base shear : 10013.2148 kN</div>
<div class="t" style="left:543px;top:366.8px">Fundamental time period : 0.4119 sec</div>
<div class="fs" style="left:781px;top:295px;width:225px;height:132px"></div>
<div class="lg" style="left:790px;top:288.7px">Developed by</div>
<svg width="90" height="90" viewBox="0 0 90 90" style="position:absolute;left:848px;top:302px">
<defs>
<clipPath id="pc"><rect x="0" y="0" width="90" height="90" rx="9" ry="9"/></clipPath>
<linearGradient id="pbg" x1="0" y1="0" x2="1" y2="0">
<stop offset="0" stop-color="#4d7ed8"/><stop offset="0.35" stop-color="#6f98de"/><stop offset="1" stop-color="#9db7e5"/>
</linearGradient>
<linearGradient id="pskin" x1="0" y1="0" x2="1" y2="0">
<stop offset="0" stop-color="#c18f7a"/><stop offset="0.5" stop-color="#d6a590"/><stop offset="1" stop-color="#c8977f"/>
</linearGradient>
<linearGradient id="psuit" x1="0" y1="0" x2="1" y2="0">
<stop offset="0" stop-color="#5a5f69"/><stop offset="0.5" stop-color="#4a4f58"/><stop offset="1" stop-color="#5d6672"/>
</linearGradient>
</defs>
<g clip-path="url(#pc)">
<rect width="90" height="90" fill="url(#pbg)"/>
<path d="M33,58 L57,58 L58,76 L45,88 L32,76 Z" fill="#c08d78"/>
<path d="M0,86 C8,80 20,76 31,71 L45,90 L0,90 Z" fill="url(#psuit)"/>
<path d="M90,86 C82,80 70,76 59,71 L45,90 L90,90 Z" fill="url(#psuit)"/>
<path d="M31,70 L37,69 L45,86 L45,90 L33,90 L30,75 Z" fill="#dfe6f3"/>
<path d="M59,70 L53,69 L45,86 L45,90 L57,90 L60,75 Z" fill="#d8e0ee"/>
<ellipse cx="24.5" cy="46" rx="3" ry="5.5" fill="#c48f78"/>
<ellipse cx="67" cy="46" rx="3" ry="5.5" fill="#c48f78"/>
<path d="M26,34 C26,22 35,18 45,18 C57,18 66,22 66,34 L66,46 C66,58 57,68.5 45.5,68.5 C34,68.5 26,58 26,46 Z" fill="url(#pskin)"/>
<path d="M21,31 C19,17 30,6 45,6 C61,6 71,16 69,31 L68,41 L66.5,41 C66,32 63,25 57,22 C52,24 45,22 38,23 C32,25 28,30 27,40 L24,41 C22,37 21,34 21,31 Z" fill="#2c2624"/>
<path d="M23,22 C26,12 33,8 40,8 C33,12 28,17 25,28 Z" fill="#5d6a82" opacity="0.55"/>
<path d="M31,38 C34,36.5 38,36.5 40,38 C38,39.5 34,39.5 31,38 Z" fill="#4a3028"/>
<path d="M50,38 C52,36.5 56,36.5 59,38 C56,39.5 52,39.5 50,38 Z" fill="#4a3028"/>
<path d="M30,34.5 C33,33 37,33 41,34.5" stroke="#3a2a24" stroke-width="1.1" fill="none"/>
<path d="M49,34.5 C53,33 57,33 60,34.5" stroke="#3a2a24" stroke-width="1.1" fill="none"/>
<path d="M44,42 L43,49 C44,50 47,50 48,49" stroke="#a8735e" stroke-width="0.9" fill="none"/>
<path d="M37,54 C41,52.5 49,52.5 53,54 C49,55.5 41,55.5 37,54 Z" fill="#6e4236"/>
<path d="M39,57 C42,58 48,58 51,57" stroke="#a06a58" stroke-width="1" fill="none"/>
</g>
</svg>

<div class="t" style="left:781px;width:225px;text-align:center;top:394px;font-size:9.6px;color:#333">Ajaya Khatri</div>
<div class="t" style="left:781px;width:225px;text-align:center;top:409px;font-size:8.9px;color:#000;-webkit-text-stroke:0.25px #000">mrajayakhatri@gmail.com</div>
<div class="fs" style="left:536px;top:434px;width:470px;height:98px"></div>
<div class="lg" style="left:545px;top:429px">Range of application</div>
<div class="t" style="left:543px;top:455.0px">2.5 ≤ length of bays in x (m) ≤ 4.5</div>
<div class="t" style="left:773px;top:455.0px">2.5 ≤ length of bays in y (m) ≤ 4.5</div>
<div class="t" style="left:543px;top:469.5px">2.6 ≤ height of floor (m) ≤ 3</div>
<div class="t" style="left:773px;top:469.5px">2 ≤ bays in x ≤ 4</div>
<div class="t" style="left:543px;top:484.0px">2 ≤ bays in y ≤ 4</div>
<div class="t" style="left:773px;top:484.0px">2 ≤ floors ≤ 5</div>
<div class="t" style="left:543px;top:498.5px">0.325 ≤ depth_of_beam (m) ≤ 0.45</div>
<div class="t" style="left:773px;top:498.5px">0.3 ≤ width_of_column (m) ≤ 0.7</div>
<div class="t" style="left:543px;top:513.0px">900 ≤ elastic modulus of masonry (MPa) ≤ 1900</div>
<div class="t" style="left:773px;top:513.0px">20 ≤ wall opening (%) ≤ 60</div>
<div class="t" style="left:551px;top:537px">Note: To ensure the parameters are in range of application an automatic validation is added for inputs.</div>
</body></html>
